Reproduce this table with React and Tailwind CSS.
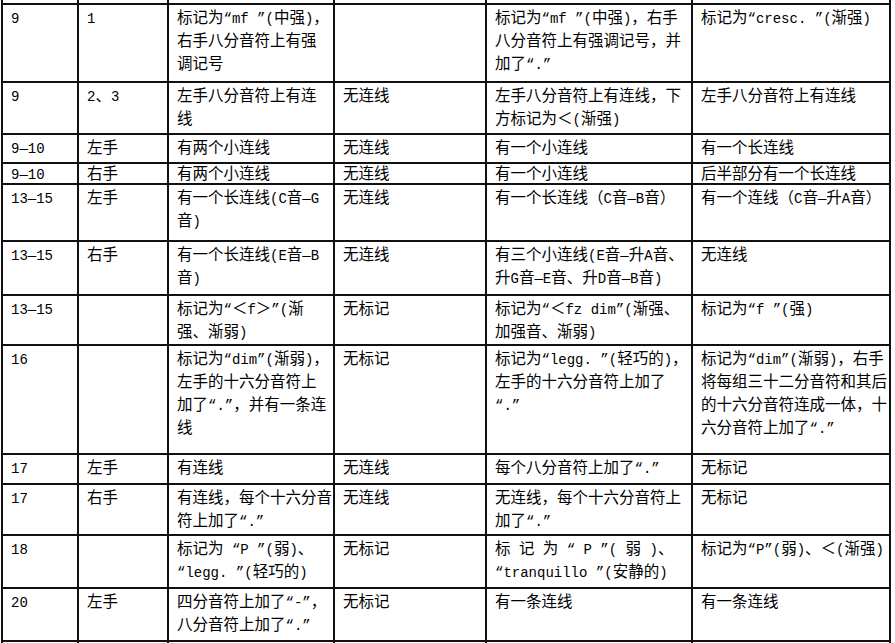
import React from 'react';

const rows = [
  { h: 78, c: ['9', '1', ['标记为“mf ”(中强)，', '右手八分音符上有强', '调记号'], '', ['标记为“mf ”(中强)，右手', '八分音符上有强调记号，并', '加了“.”'], '标记为“cresc. ”(渐强)'] },
  { h: 52, c: ['9', '2、3', ['左手八分音符上有连', '线'], '无连线', ['左手八分音符上有连线，下', '方标记为＜(渐强)'], '左手八分音符上有连线'] },
  { h: 29, c: ['9—10', '左手', '有两个小连线', '无连线', '有一个小连线', '有一个长连线'] },
  { h: 21, tight: true, c: ['9—10', '右手', '有两个小连线', '无连线', '有一个小连线', '后半部分有一个长连线'] },
  { h: 57, c: ['13—15', '左手', ['有一个长连线(C音—G', '音)'], '无连线', '有一个长连线（C音—B音）', '有一个连线（C音—升A音）'] },
  { h: 54, c: ['13—15', '右手', ['有一个长连线(E音—B', '音)'], '无连线', ['有三个小连线(E音—升A音、', '升G音—E音、升D音—B音)'], '无连线'] },
  { h: 50, c: ['13—15', '', ['标记为“＜f＞”(渐', '强、渐弱)'], '无标记', ['标记为“＜fz dim”(渐强、', '加强音、渐弱)'], '标记为“f ”(强)'] },
  { h: 109, c: ['16', '', ['标记为“dim”(渐弱)，', '左手的十六分音符上', '加了“.”，并有一条连', '线'], '无标记', ['标记为“legg. ”(轻巧的)，', '左手的十六分音符上加了', '“.”'], ['标记为“dim”(渐弱)，右手', '将每组三十二分音符和其后', '的十六分音符连成一体，十', '六分音符上加了“.”']] },
  { h: 30, c: ['17', '左手', '有连线', '无连线', '每个八分音符上加了“.”', '无标记'] },
  { h: 51, c: ['17', '右手', ['有连线，每个十六分音', '符上加了“.”'], '无连线', ['无连线，每个十六分音符上', '加了“.”'], '无标记'] },
  { h: 53, c: ['18', '', ['标记为 “P ”(弱)、', '“legg. ”(轻巧的)'], '无标记', ['标 记 为 “ P ”( 弱 )、', '“tranquillo ”(安静的)'], '标记为“P”(弱)、＜(渐强)'] },
  { h: 53, c: ['20', '左手', ['四分音符上加了“-”，', '八分音符上加了“.”'], '无标记', '有一条连线', '有一条连线'] },
];

const widths = [76, 90, 166, 152, 206, 198];

function Mixed({ text }) {
  const parts = text.split(/([\x20-\x7E—“”]+)/);
  return parts.map((p, i) =>
    /^[\x20-\x7E—“”]+$/.test(p) ? (
      <span key={i} className="font-['Liberation_Mono',monospace] text-[14px]">{p}</span>
    ) : (
      <span key={i}>{p}</span>
    )
  );
}

function Cell({ value, tight }) {
  const lines = Array.isArray(value) ? value : [value];
  return (
    <td className="border-2 border-[#111] align-top p-0 pl-[8px] pr-1 whitespace-nowrap overflow-visible">
      {lines.map((l, i) => (
        <div key={i} className={tight ? 'h-[17px] leading-[17px]' : 'h-[23px] leading-[23px]'}>
          <Mixed text={l} />
        </div>
      ))}
    </td>
  );
}

export default function App() {
  return (
    <div className="w-[895px] h-[643px] overflow-hidden bg-white">
      <table className="w-[888px] table-fixed border-collapse -mt-[9px] ml-[1px] font-['Noto_Sans_CJK_SC',sans-serif] text-[15.5px] text-black">
        <colgroup>
          {widths.map((w, i) => (
            <col key={i} style={{ width: w }} />
          ))}
        </colgroup>
        <tbody>
          <tr className="h-[12px]">
            {widths.map((w, i) => (
              <td key={i} className="border-2 border-[#111] p-0" />
            ))}
          </tr>
          {rows.map((r, ri) => (
            <tr key={ri} style={{ height: r.h }}>
              {r.c.map((v, ci) => (
                <Cell key={ci} value={v} tight={r.tight} />
              ))}
            </tr>
          ))}
          <tr className="h-[30px]">
            {widths.map((w, i) => (
              <td key={i} className="border-2 border-[#111] p-0" />
            ))}
          </tr>
        </tbody>
      </table>
    </div>
  );
}
